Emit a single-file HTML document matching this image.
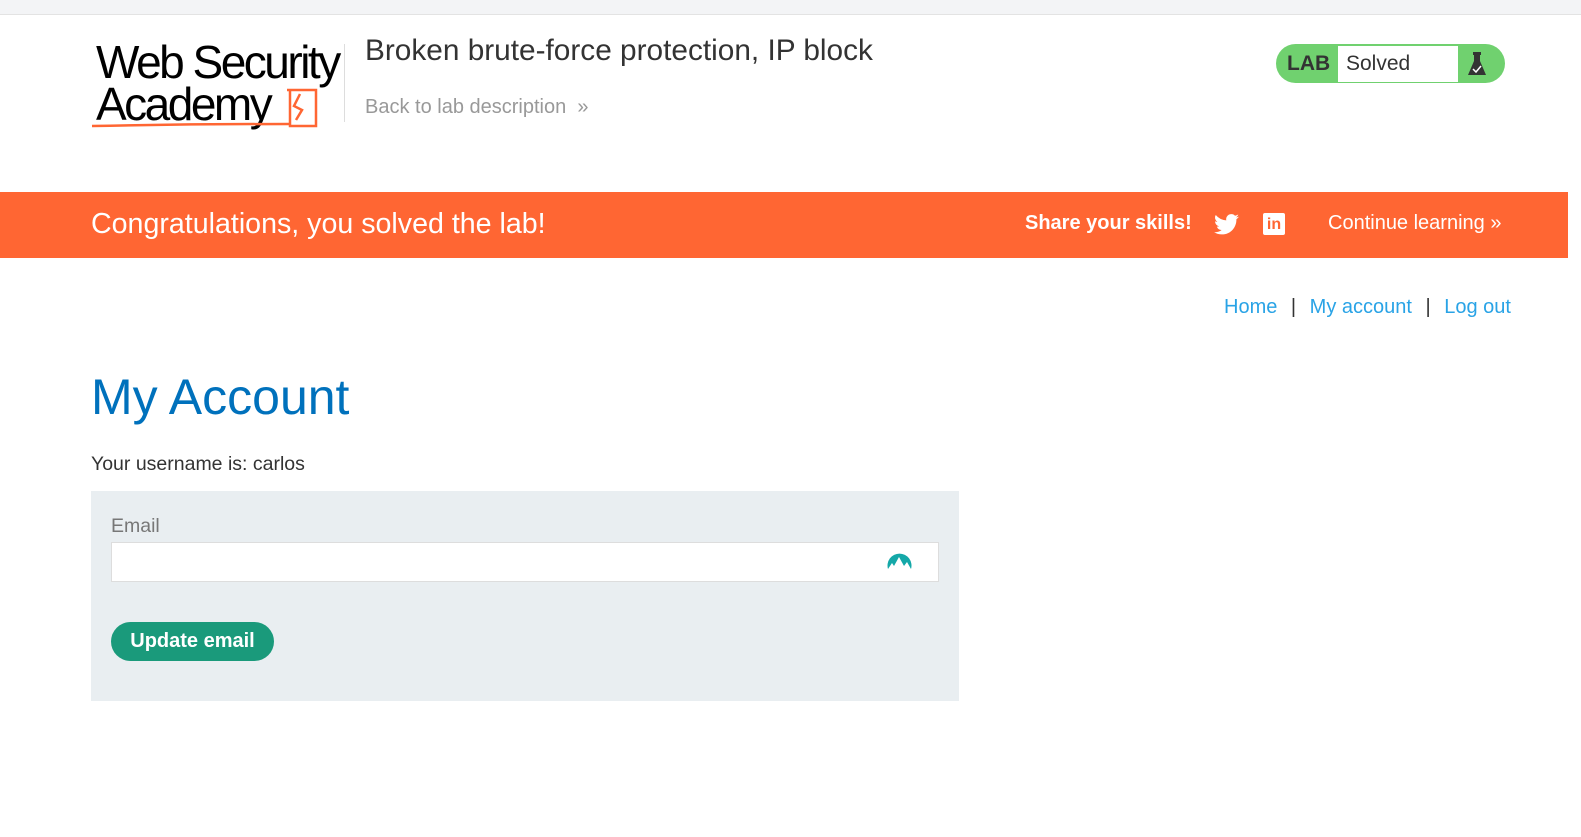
<!DOCTYPE html>
<html><head><meta charset="utf-8"><style>
*{margin:0;padding:0;box-sizing:border-box}
body{width:1581px;height:837px;background:#fff;font-family:"Liberation Sans",Arial,sans-serif;position:relative;overflow:hidden}
.top{position:absolute;left:0;top:0;width:1581px;height:15px;background:#f3f4f6;border-bottom:1px solid #e3e3e3}
.abs{position:absolute}
</style></head><body>
<div class="top"></div>
<div class="abs" style="left:96px;top:41px;font-size:46px;letter-spacing:-2.5px;line-height:42px;color:#000">Web Security<br>Academy</div>
<svg class="abs" style="left:90px;top:84px" width="232" height="48">
<path d="M197 6 H226 V42 H200 V6" fill="none" stroke="#ff6633" stroke-width="2.5"/>
<path d="M210 10 L204 22 L212 26 L206 36" fill="none" stroke="#ff6633" stroke-width="2.5"/>
<path d="M2 42 Q100 40 200 40" fill="none" stroke="#ff6633" stroke-width="2.5"/>
</svg>
<div class="abs" style="left:344px;top:44px;width:1px;height:78px;background:#ddd"></div>
<div class="abs" style="left:365px;top:34px;font-size:29.8px;color:#333">Broken brute-force protection, IP block</div>
<div class="abs" style="left:365px;top:96px;font-size:20px;color:#999">Back to lab description &nbsp;»</div>
<div class="abs" style="left:1276px;top:44px;width:229px;height:39px;border-radius:20px;background:#70d16f"></div>
<div class="abs" style="left:1287px;top:52px;font-size:21px;font-weight:bold;color:#333">LAB</div>
<div class="abs" style="left:1338px;top:46px;width:120px;height:36px;background:#fff"></div>
<div class="abs" style="left:1346px;top:52px;font-size:21px;color:#333">Solved</div>
<svg class="abs" style="left:1466px;top:51px" width="22" height="26"><rect x="7" y="1" width="8" height="3" fill="#333"/><path d="M8 4 V10 L2 24 H20 L14 10 V4" fill="#333"/><path d="M7 18 L10 21 L15 15" stroke="#fff" stroke-width="1.5" fill="none"/></svg>
<div class="abs" style="left:0;top:192px;width:1568px;height:66px;background:#ff6633"></div>
<div class="abs" style="left:91px;top:208px;font-size:28.6px;color:#fff">Congratulations, you solved the lab!</div>
<div class="abs" style="left:1025px;top:212px;font-size:20px;font-weight:bold;color:#fff">Share your skills!</div>
<svg class="abs" style="left:1214px;top:214px" width="25" height="21" viewBox="0 0 24 20"><path d="M24 2.4a9.8 9.8 0 0 1-2.8.8A4.9 4.9 0 0 0 23.3.4a9.9 9.9 0 0 1-3.1 1.2A4.9 4.9 0 0 0 11.8 6 14 14 0 0 1 1.7.9a4.9 4.9 0 0 0 1.5 6.6A4.9 4.9 0 0 1 1 6.9a4.9 4.9 0 0 0 3.9 4.9 4.9 4.9 0 0 1-2.2.1 4.9 4.9 0 0 0 4.6 3.4A9.9 9.9 0 0 1 0 17.3 14 14 0 0 0 7.5 19.5c9.1 0 14-7.5 14-14v-.6A10 10 0 0 0 24 2.4z" fill="#fff"/></svg>
<div class="abs" style="left:1263px;top:213px;width:22px;height:22px;background:#fff;border-radius:2px;color:#ff6633;font-weight:bold;font-size:16px;text-align:center;line-height:24px">in</div>
<div class="abs" style="left:1328px;top:212px;font-size:20px;color:#fff">Continue learning »</div>
<div class="abs" style="left:1224px;top:296px;font-size:20px;color:#29a3e6">Home <span style="color:#333;margin:0 8px">|</span> My account <span style="color:#333;margin:0 8px">|</span> Log out</div>
<div class="abs" style="left:91px;top:368px;font-size:50px;color:#0071bc">My Account</div>
<div class="abs" style="left:91px;top:453px;font-size:19.5px;color:#333">Your username is: carlos</div>
<div class="abs" style="left:91px;top:491px;width:868px;height:210px;background:#e9eef1"></div>
<div class="abs" style="left:111px;top:515px;font-size:19.5px;color:#777">Email</div>
<div class="abs" style="left:111px;top:542px;width:828px;height:40px;background:#fff;border:1px solid #ddd"></div>
<svg class="abs" style="left:886px;top:549px" width="28" height="24"><path d="M2 20 A12 12 0 1 1 25 20 L21 13 L18 17 L13 8 L8 17 L6 14 Z" fill="#14a8a8"/></svg>
<div class="abs" style="left:111px;top:622px;width:163px;height:39px;border-radius:20px;background:#1a9a7b;color:#fff;font-weight:bold;font-size:20px;text-align:center;line-height:39px">Update email</div>
</body></html>
